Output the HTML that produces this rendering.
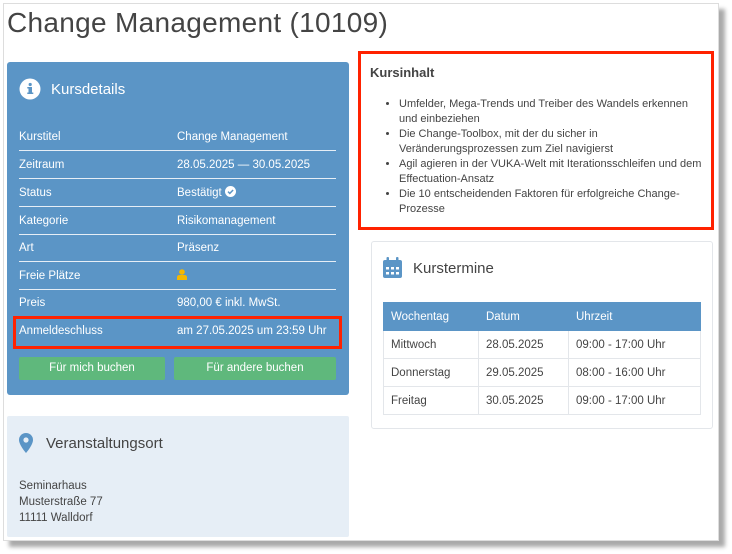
<!DOCTYPE html>
<html><head><meta charset="utf-8"><style>
*{box-sizing:border-box;margin:0;padding:0}
body{width:732px;height:554px;background:#fff;font-family:"Liberation Sans",sans-serif;position:relative;overflow:hidden;color:#444}
.frame{position:absolute;left:3px;top:3px;width:716px;height:538px;background:#fff;border:1px solid #ddd;box-shadow:6px 6px 4px #aaa}
.abs{position:absolute}
h1{position:absolute;left:7px;top:7px;font-size:28px;font-weight:normal;color:#444;letter-spacing:0.3px}
.blue{position:absolute;left:7px;top:62px;width:342px;height:333px;background:#5b95c6;border-radius:3px;color:#fff}
.row{position:absolute;left:12px;width:317px;height:28px;font-size:11.5px;line-height:28px;border-bottom:1px solid #e6eef6}
.row span{position:absolute;left:158px}
.btn{position:absolute;top:295px;height:23px;background:#5fb87c;border-radius:2px;color:#fff;font-size:11.5px;text-align:center;line-height:23px}
.red{position:absolute;border:3px solid #ff2200}
.loc{position:absolute;left:7px;top:416px;width:342px;height:121px;background:#e6eef6;border-radius:2px}
ul{list-style:disc;font-size:11px;line-height:15px;color:#444;white-space:nowrap}
table{border-collapse:collapse;font-size:11.5px}
td,th{height:28px;padding-left:7px;text-align:left;border:1px solid #e3e6ea}
th{background:#5b95c6;color:#fff;font-weight:normal;border-color:#5b95c6}
</style></head><body>
<div class="frame"></div>
<h1>Change Management (10109)</h1>
<div class="blue">
 <svg class="abs" style="left:12px;top:16px" width="22" height="22" viewBox="0 0 22 22"><circle cx="11" cy="11" r="10.5" fill="#fff"/><rect x="9.5" y="9" width="3.5" height="7" fill="#5b95c6"/><rect x="8.3" y="9" width="2" height="1.5" fill="#5b95c6"/><rect x="8.3" y="14.5" width="6" height="1.5" fill="#5b95c6"/><circle cx="11.2" cy="6.5" r="1.6" fill="#5b95c6"/></svg>
 <div class="abs" style="left:44px;top:19px;font-size:15px">Kursdetails</div>
 <div class="row" style="top:61px">Kurstitel<span>Change Management</span></div>
 <div class="row" style="top:89px">Zeitraum<span>28.05.2025 — 30.05.2025</span></div>
 <div class="row" style="top:117px">Status<span>Bestätigt <svg width="11" height="11" viewBox="0 0 11 11" style="vertical-align:-1px"><circle cx="5.5" cy="5.5" r="5.5" fill="#fff"/><path d="M3 5.6l1.8 1.8 3.3-3.4" stroke="#5b95c6" stroke-width="1.5" fill="none"/></svg></span></div>
 <div class="row" style="top:145px">Kategorie<span>Risikomanagement</span></div>
 <div class="row" style="top:172px">Art<span>Präsenz</span></div>
 <div class="row" style="top:200px">Freie Plätze<span><svg width="10" height="11" viewBox="0 0 10 11" style="vertical-align:-1px"><circle cx="5" cy="3" r="2.8" fill="#f5b800"/><path d="M0 11v-2.5q0-2.5 2.5-2.5h5q2.5 0 2.5 2.5V11z" fill="#f5b800"/></svg></span></div>
 <div class="row" style="top:227px;border:none">Preis<span>980,00 € inkl. MwSt.</span></div>
 <div class="row" style="top:255px;border:none">Anmeldeschluss<span>am 27.05.2025 um 23:59 Uhr</span></div>
 <div class="btn" style="left:12px;width:146px">Für mich buchen</div>
 <div class="btn" style="left:167px;width:162px">Für andere buchen</div>
</div>
<div class="red" style="left:13px;top:316px;width:329px;height:33px"></div>
<div class="loc">
 <svg class="abs" style="left:12px;top:17px" width="14" height="20" viewBox="0 0 14 20"><path d="M7 0a7 7 0 0 1 7 7c0 5-7 13-7 13S0 12 0 7a7 7 0 0 1 7-7z" fill="#5b95c6"/><circle cx="7" cy="7" r="2.6" fill="#e6eef6"/></svg>
 <div class="abs" style="left:39px;top:19px;font-size:15px;color:#444">Veranstaltungsort</div>
 <div class="abs" style="left:12px;top:62px;font-size:11.5px;line-height:16px">Seminarhaus<br>Musterstraße 77<br>11111 Walldorf</div>
</div>
<div class="red" style="left:358px;top:51px;width:356px;height:179px"></div>
<div class="abs" style="left:370px;top:65px;font-size:13px;font-weight:bold;color:#444">Kursinhalt</div>
<ul class="abs" style="left:386px;top:97px;width:327px;padding-left:13px">
<li>Umfelder, Mega-Trends und Treiber des Wandels erkennen<br>und einbeziehen</li>
<li>Die Change-Toolbox, mit der du sicher in<br>Veränderungsprozessen zum Ziel navigierst</li>
<li>Agil agieren in der VUKA-Welt mit Iterationsschleifen und dem<br>Effectuation-Ansatz</li>
<li>Die 10 entscheidenden Faktoren für erfolgreiche Change-<br>Prozesse</li>
</ul>
<div class="abs" style="left:371px;top:241px;width:342px;height:188px;border:1px solid #e3e6ea;border-radius:3px"></div>
<svg class="abs" style="left:383px;top:257px" width="19" height="21" viewBox="0 0 19 21"><rect x="0" y="3" width="19" height="18" rx="2" fill="#5b95c6"/><rect x="3.5" y="0" width="2.5" height="5" rx="1" fill="#5b95c6"/><rect x="13" y="0" width="2.5" height="5" rx="1" fill="#5b95c6"/><g fill="#fff"><rect x="3" y="10" width="3" height="2.5"/><rect x="8" y="10" width="3" height="2.5"/><rect x="13" y="10" width="3" height="2.5"/><rect x="3" y="15" width="3" height="2.5"/><rect x="8" y="15" width="3" height="2.5"/><rect x="13" y="15" width="3" height="2.5"/></g></svg>
<div class="abs" style="left:413px;top:260px;font-size:15px;color:#444">Kurstermine</div>
<table class="abs" style="left:383px;top:302px;width:318px">
<tr><th style="width:95px">Wochentag</th><th style="width:90px">Datum</th><th>Uhrzeit</th></tr>
<tr><td>Mittwoch</td><td>28.05.2025</td><td>09:00 - 17:00 Uhr</td></tr>
<tr><td>Donnerstag</td><td>29.05.2025</td><td>08:00 - 16:00 Uhr</td></tr>
<tr><td>Freitag</td><td>30.05.2025</td><td>09:00 - 17:00 Uhr</td></tr>
</table>
</body></html>
